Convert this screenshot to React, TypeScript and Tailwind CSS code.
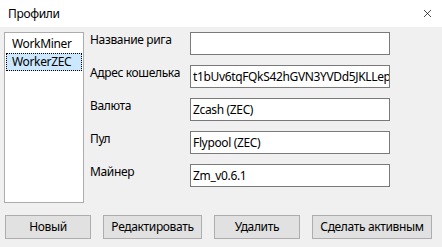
import { X } from 'lucide-react';

const fields = [
  { label: 'Название рига', value: '' },
  { label: 'Адрес кошелька', value: 't1bUv6tqFQkS42hGVN3YVDd5JKLLepZsT8c' },
  { label: 'Валюта', value: 'Zcash (ZEC)' },
  { label: 'Пул', value: 'Flypool (ZEC)' },
  { label: 'Майнер', value: 'Zm_v0.6.1' },
];

const buttons = [
  { text: 'Новый', w: 'w-[86px]' },
  { text: 'Редактировать', w: 'w-[99px]' },
  { text: 'Удалить', w: 'w-[86px]' },
  { text: 'Сделать активным', w: 'w-[120px]' },
];

export default function App() {
  return (
    <div
      className="w-[442px] h-[247px] bg-[#f0f0f0] text-[12px] tracking-[-0.35px] text-black flex flex-col overflow-hidden"
      style={{ fontFamily: '"Noto Sans", "Open Sans", sans-serif' }}
    >
      {/* window title */}
      <div className="h-[27px] bg-white flex items-center justify-between pl-[8px] pr-[8px]">
        <span className="leading-[16px]">Профили</span>
        <X className="w-[13px] h-[13px]" strokeWidth={1.3} />
      </div>

      <div className="flex pt-[5px] pl-[4px]">
        {/* profiles list */}
        <div className="w-[80px] h-[171px] bg-white border border-[#acacac] pt-[2px] px-[1px]">
          <div className="h-[18px] flex items-center pl-[6px] leading-[16px]">WorkMiner</div>
          <div className="h-[18px] flex items-center pl-[5px] leading-[16px] bg-[#cce8ff] border border-dotted border-black">
            WorkerZEC
          </div>
        </div>

        {/* fields */}
        <div className="flex flex-col gap-[10px] ml-[6px]">
          {fields.map(f => (
            <div key={f.label} className="flex items-start h-[23px]">
              <div className="w-[100px] leading-[16px]">{f.label}</div>
              <div className="w-[200px] h-[23px] bg-white border border-[#7a7a7a] flex items-center pl-[2px] overflow-hidden whitespace-nowrap">
                {f.value}
              </div>
            </div>
          ))}
        </div>
      </div>

      {/* actions */}
      <div className="flex gap-[12px] mt-[12px] pl-[5px]">
        {buttons.map(b => (
          <div
            key={b.text}
            className={`${b.w} h-[24px] bg-[#e1e1e1] border border-[#adadad] flex items-center justify-center`}
          >
            {b.text}
          </div>
        ))}
      </div>
    </div>
  );
}
